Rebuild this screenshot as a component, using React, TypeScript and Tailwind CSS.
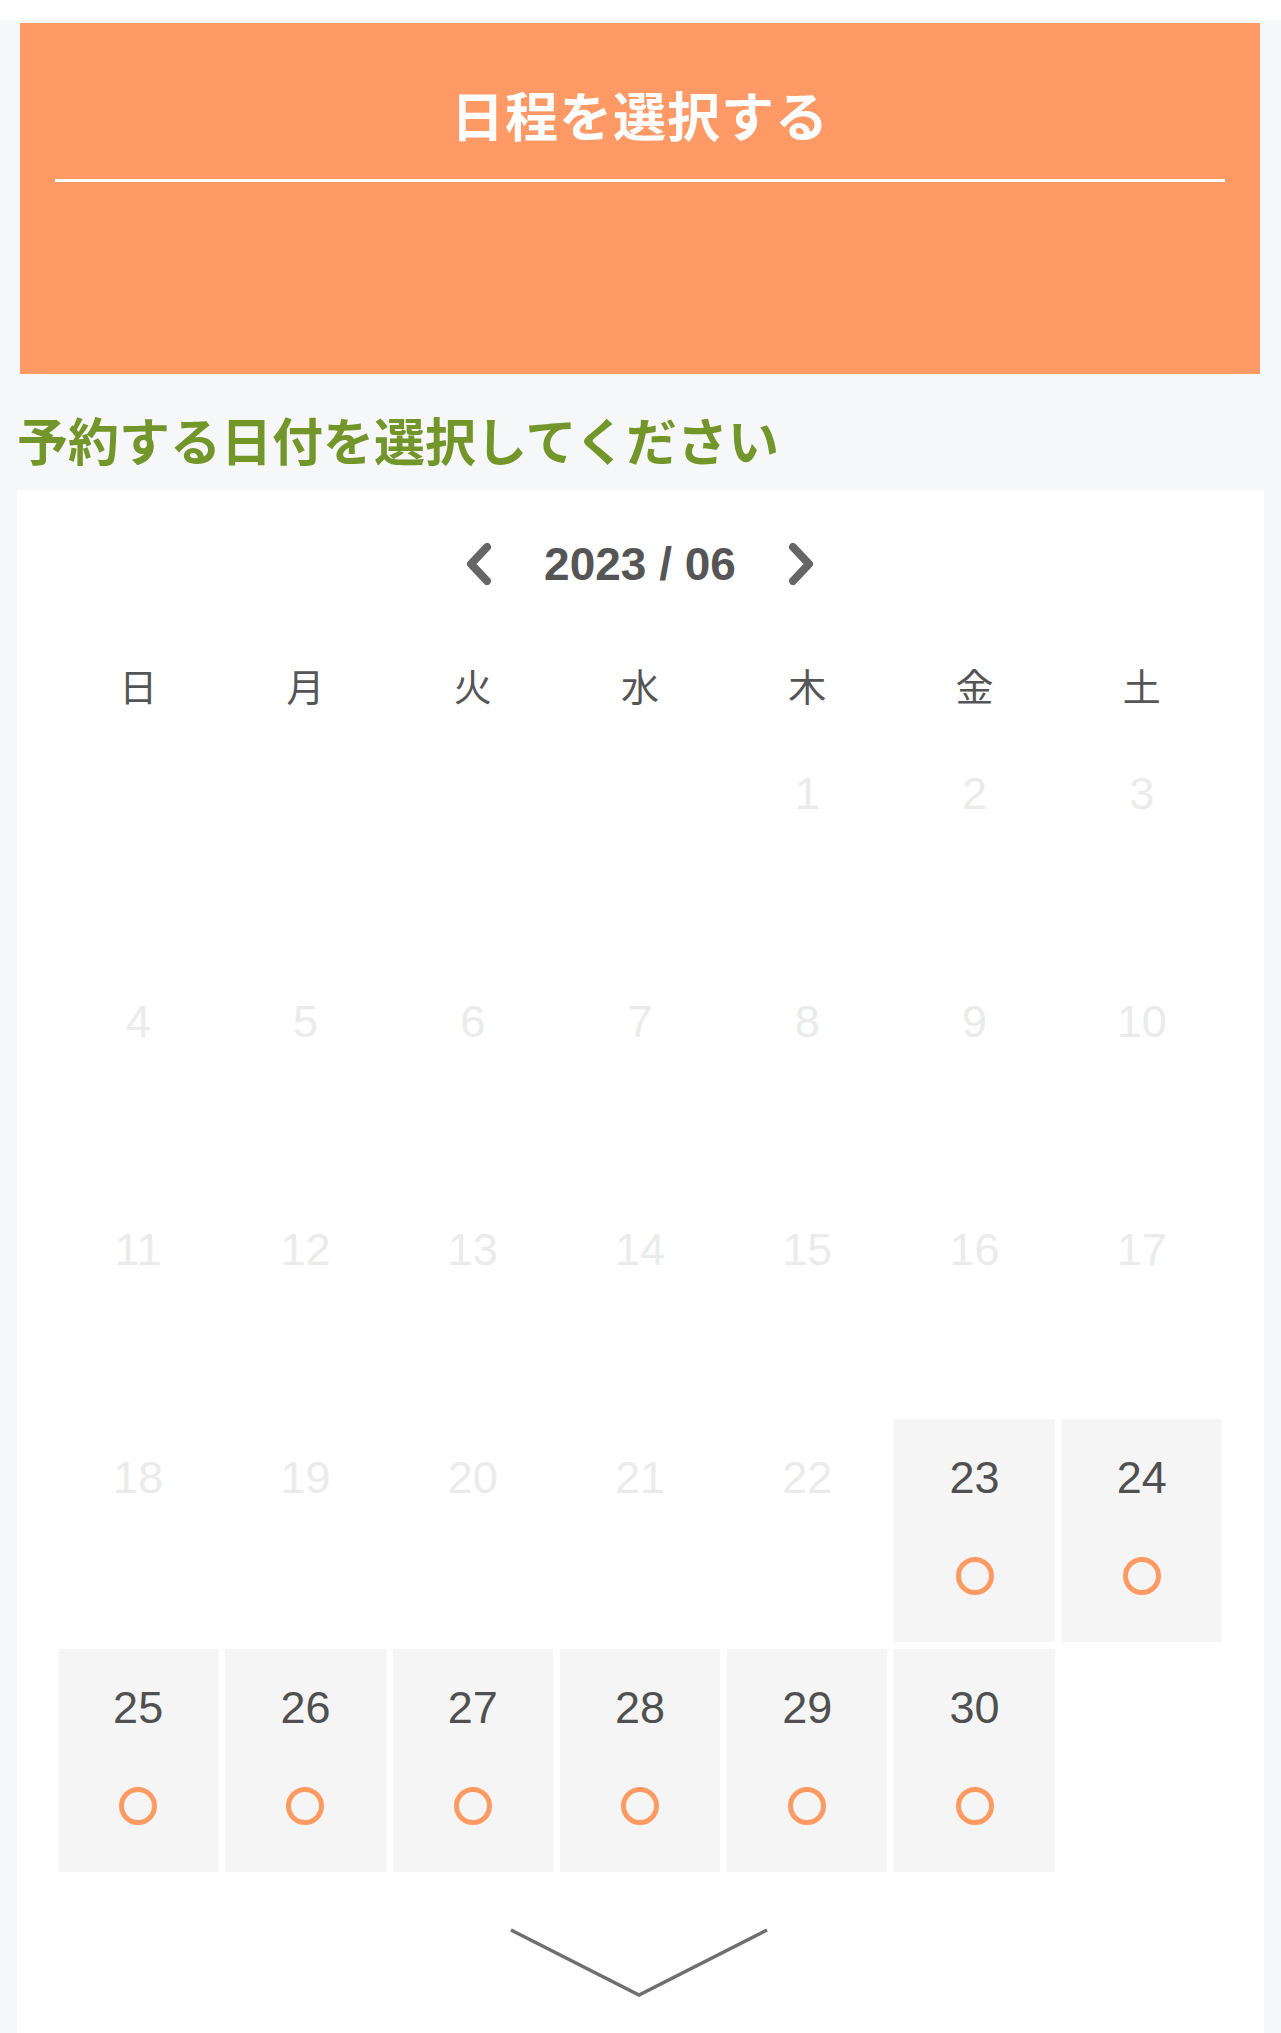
import React from "react";

const weekdays = ["日", "月", "火", "水", "木", "金", "土"];

// June 2023 starts on Thursday
const cells: (number | null)[] = [
  null, null, null, null, 1, 2, 3,
  4, 5, 6, 7, 8, 9, 10,
  11, 12, 13, 14, 15, 16, 17,
  18, 19, 20, 21, 22, 23, 24,
  25, 26, 27, 28, 29, 30, null,
];

const firstOpen = 23;

function Chevron({ dir }: { dir: "left" | "right" }) {
  const d = dir === "left" ? "M23 5 L7 22 L23 39" : "M7 5 L23 22 L7 39";
  return (
    <svg width="30" height="44" viewBox="0 0 30 44" fill="none">
      <path d={d} stroke="#666" strokeWidth="8" strokeLinecap="round" strokeLinejoin="round" />
    </svg>
  );
}

function DayCell({ day }: { day: number | null }) {
  if (day === null) return <div />;
  const open = day >= firstOpen;
  return (
    <div
      className={
        open
          ? "bg-[#f5f5f5] flex flex-col items-center pt-[36px] cursor-pointer"
          : "flex flex-col items-center pt-[36px]"
      }
    >
      <span
        className={
          open
            ? "text-[45px] leading-[45px] text-[#505050]"
            : "text-[45px] leading-[45px] text-[#ebebeb]"
        }
      >
        {day}
      </span>
      {open && <div className="mt-[57px] w-[38px] h-[38px] rounded-full border-[5px] border-[#ff9a62]" />}
    </div>
  );
}

export default function App() {
  return (
    <div
      className="h-[2033px] overflow-hidden bg-[#f6f7f9] flex flex-col"
      style={{ fontFamily: '"Liberation Sans", "Noto Sans CJK JP", sans-serif' }}
    >
      <div className="h-[20px] bg-white shrink-0" />

      <div className="ml-[20px] mr-[21px] mt-[3px] h-[351px] shrink-0 bg-[#ff9966] pt-[69px] px-[35px]">
        <h1 className="text-center text-white text-[53px] leading-[53px] font-bold tracking-[1px]">
          日程を選択する
        </h1>
        <div className="mt-[34px] h-[3px] bg-white" />
      </div>

      <h2 className="mt-[44px] pl-[17px] text-[51px] leading-[51px] font-bold text-[#73962a] shrink-0">
        予約する日付を選択してください
      </h2>

      <div className="mt-[21px] ml-[17px] mr-[17px] flex-1 bg-white pt-[51px] pl-[41px] pr-[42px]">
        <div className="flex items-center justify-center">
          <button className="flex">
            <Chevron dir="left" />
          </button>
          <span className="mx-[50px] text-[46px] leading-[46px] font-bold text-[#555]">2023 / 06</span>
          <button className="flex">
            <Chevron dir="right" />
          </button>
        </div>

        <div className="mt-[81px] grid grid-cols-7 gap-[7px]">
          {weekdays.map((w) => (
            <div key={w} className="text-center text-[38px] leading-[40px] text-[#555]">
              {w}
            </div>
          ))}
        </div>

        <div className="mt-[27px] grid grid-cols-7 grid-rows-[221px_221px_221px_223px_223px] gap-[7px]">
          {cells.map((d, i) => (
            <DayCell key={i} day={d} />
          ))}
        </div>

        <div className="mt-[55px] flex justify-center">
          <svg width="262" height="72" viewBox="0 0 262 72" fill="none">
            <path d="M2 3 L130 68 L258 3" stroke="#6f6f6f" strokeWidth="3.5" style={{ filter: "blur(0.7px)" }} />
          </svg>
        </div>
      </div>
    </div>
  );
}
